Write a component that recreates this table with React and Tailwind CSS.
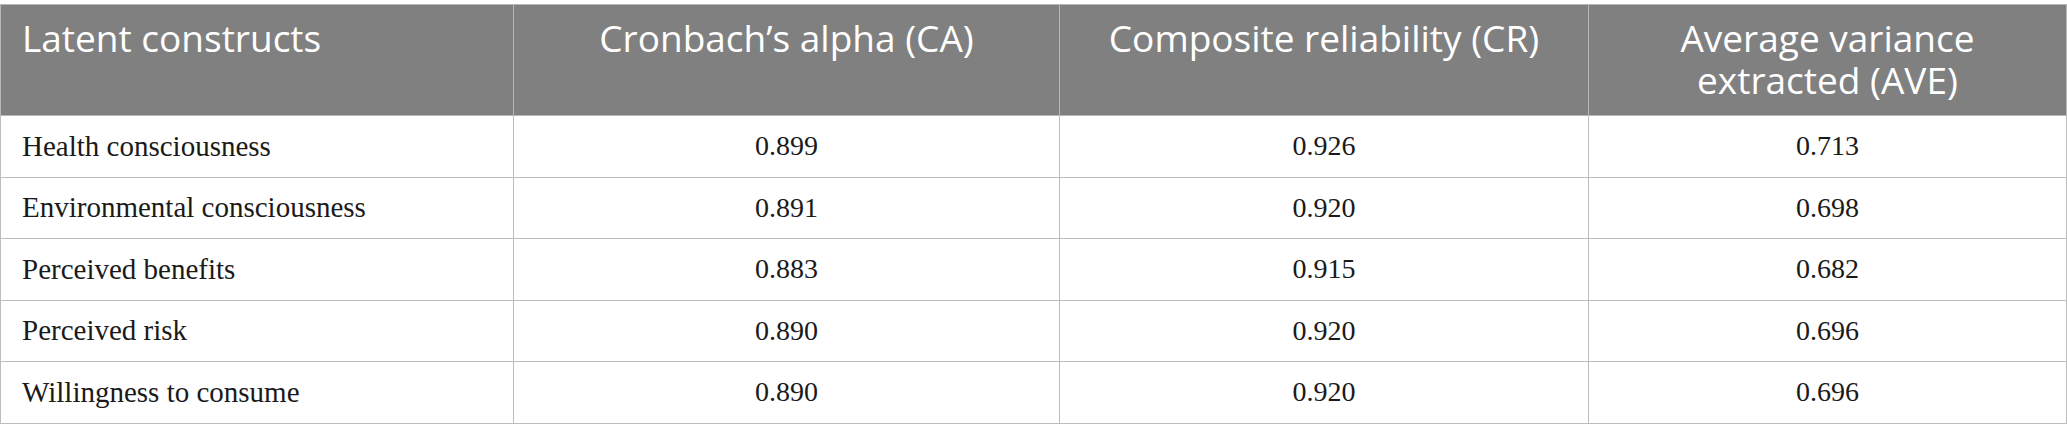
const HEADERS = [
  'Latent constructs',
  'Cronbach\u2019s alpha (CA)',
  'Composite reliability (CR)',
  'Average variance extracted (AVE)',
]

const ROWS = [
  ['Health consciousness', '0.899', '0.926', '0.713'],
  ['Environmental consciousness', '0.891', '0.920', '0.698'],
  ['Perceived benefits', '0.883', '0.915', '0.682'],
  ['Perceived risk', '0.890', '0.920', '0.696'],
  ['Willingness to consume', '0.890', '0.920', '0.696'],
]

export default function App() {
  return (
    <div className="w-[2067px] h-[440px] bg-white pt-[4px]">
      <table className="w-[2066px] table-fixed border-collapse">
        <colgroup>
          <col className="w-[513px]" />
          <col className="w-[546px]" />
          <col className="w-[529px]" />
          <col className="w-[478px]" />
        </colgroup>
        <thead>
          <tr className="h-[111px] bg-[#7f807f]">
            {HEADERS.map((h, i) => (
              <th
                key={h}
                className={`border border-[#b8b8b8] align-top pt-[12px] px-[21px] font-['Open_Sans',sans-serif] font-normal text-[37px] leading-[42px] text-white ${i === 0 ? 'text-left' : 'text-center'}`}
              >
                {h}
              </th>
            ))}
          </tr>
        </thead>
        <tbody>
          {ROWS.map(r => (
            <tr key={r[0]} className="h-[61.5px]">
              {r.map((c, i) => (
                <td
                  key={i}
                  className={`border border-[#bdbdbd] px-[21px] align-middle font-['Liberation_Serif',serif] text-[#1a1a1a] ${i === 0 ? 'text-left text-[29px]' : 'text-center text-[28px]'}`}
                >
                  {c}
                </td>
              ))}
            </tr>
          ))}
        </tbody>
      </table>
    </div>
  )
}
